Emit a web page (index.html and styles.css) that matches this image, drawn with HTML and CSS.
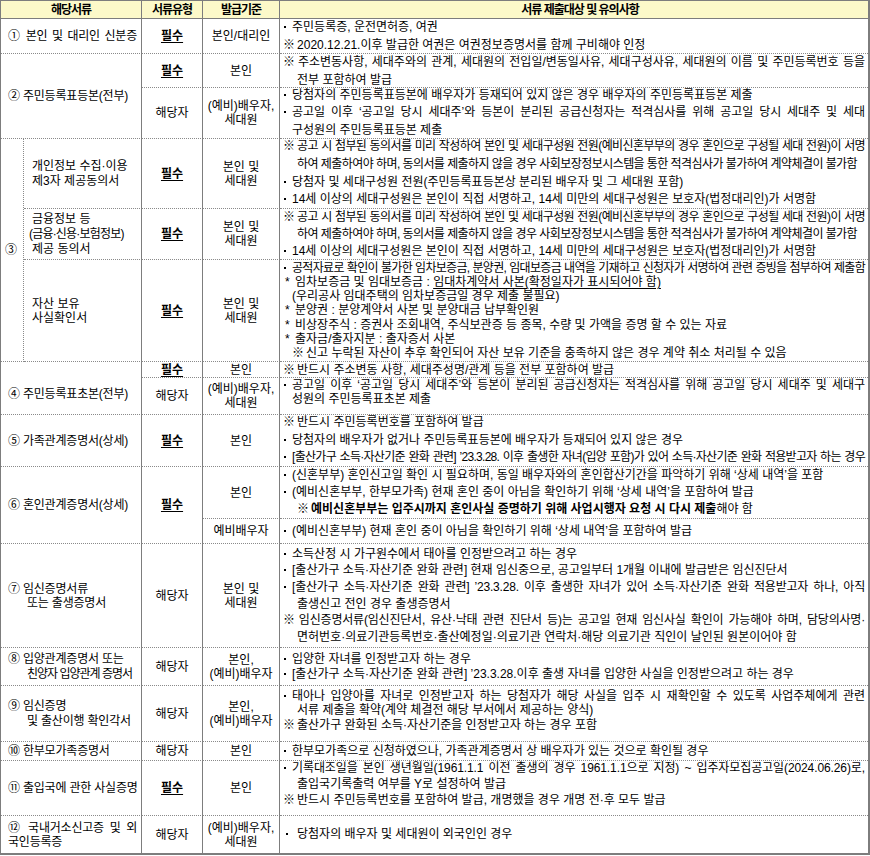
FILE: index.html
```html
<!DOCTYPE html>
<html lang="ko">
<head>
<meta charset="utf-8">
<title>제출서류 안내</title>
<link rel="stylesheet" href="styles.css">
</head>
<body>
<table class="doc">
<colgroup><col class="ca"><col class="cb"><col class="cc"><col class="cd"><col class="ce"></colgroup>
<thead>
<tr class="r0"><th colspan="2">해당서류</th><th>서류유형</th><th>발급기준</th><th class="hx">서류 제출대상 및 유의사항</th></tr>
</thead>
<tbody>
<tr class="r1">
<td colspan="2" class="nm"><div class="j">① 본인 및 대리인 신분증</div></td>
<td class="ty"><b>필수</b></td>
<td class="is">본인/대리인</td>
<td class="tx l18"><div class="in">
<div class="ln b">주민등록증, 운전면허증, 여권</div>
<div class="ln"><span class="k">※</span>2020.12.21.이후 발급한 여권은 여권정보증명서를 함께 구비해야 인정</div>
</div></td>
</tr>
<tr class="r2a">
<td colspan="2" rowspan="2" class="nm">② 주민등록표등본(전부)</td>
<td class="ty"><b>필수</b></td>
<td class="is">본인</td>
<td class="tx l18"><div class="in">
<div class="ln j"><span class="k">※</span>주소변동사항, 세대주와의 관계, 세대원의 전입일/변동일사유, 세대구성사유, 세대원의 이름 및 주민등록번호 등을</div>
<div class="ln c13">전부 포함하여 발급</div>
</div></td>
</tr>
<tr class="r2b">
<td class="ty">해당자</td>
<td class="is">(예비)배우자,<br>세대원</td>
<td class="tx l175"><div class="in">
<div class="ln b">당첨자의 주민등록표등본에 배우자가 등재되어 있지 않은 경우 배우자의 주민등록표등본 제출</div>
<div class="ln b j">공고일 이후 ‘공고일 당시 세대주’와 등본이 분리된 공급신청자는 적격심사를 위해 공고일 당시 세대주 및 세대</div>
<div class="ln c8">구성원의 주민등록표등본 제출</div>
</div></td>
</tr>
<tr class="r3a">
<td rowspan="3" class="num">③</td>
<td class="sn l15">개인정보 수집·이용<br>제3자 제공동의서</td>
<td class="ty"><b>필수</b></td>
<td class="is">본인 및<br>세대원</td>
<td class="tx l178"><div class="in">
<div class="ln j cd1"><span class="k">※</span>공고 시 첨부된 동의서를 미리 작성하여 본인 및 세대구성원 전원(예비신혼부부의 경우 혼인으로 구성될 세대 전원)이 서명</div>
<div class="ln c13 cd2">하여 제출하여야 하며, 동의서를 제출하지 않을 경우 사회보장정보시스템을 통한 적격심사가 불가하여 계약체결이 불가함</div>
<div class="ln b">당첨자 및 세대구성원 전원(주민등록표등본상 분리된 배우자 및 그 세대원 포함)</div>
<div class="ln b">14세 이상의 세대구성원은 본인이 직접 서명하고, 14세 미만의 세대구성원은 보호자(법정대리인)가 서명함</div>
</div></td>
</tr>
<tr class="r3b">
<td class="sn l15"><div>금융정보 등</div><div class="sq">(금융·신용·보험정보)</div><div>제공 동의서</div></td>
<td class="ty"><b>필수</b></td>
<td class="is">본인 및<br>세대원</td>
<td class="tx l17"><div class="in">
<div class="ln j cd1"><span class="k">※</span>공고 시 첨부된 동의서를 미리 작성하여 본인 및 세대구성원 전원(예비신혼부부의 경우 혼인으로 구성될 세대 전원)이 서명</div>
<div class="ln c13 cd2">하여 제출하여야 하며, 동의서를 제출하지 않을 경우 사회보장정보시스템을 통한 적격심사가 불가하여 계약체결이 불가함</div>
<div class="ln b">14세 이상의 세대구성원은 본인이 직접 서명하고, 14세 미만의 세대구성원은 보호자(법정대리인)가 서명함</div>
</div></td>
</tr>
<tr class="r3c">
<td class="sn l14">자산 보유<br>사실확인서</td>
<td class="ty"><b>필수</b></td>
<td class="is">본인 및<br>세대원</td>
<td class="tx l142"><div class="in">
<div class="ln b j cd3">공적자료로 확인이 불가한 임차보증금, 분양권, 임대보증금 내역을 기재하고 신청자가 서명하여 관련 증빙을 첨부하여 제출함</div>
<div class="ln"><span class="st">*</span>임차보증금 및 임대보증금 : <span class="u">임대차계약서 사본(확정일자가 표시되어야 함)</span></div>
<div class="ln c8">(우리공사 임대주택의 임차보증금일 경우 제출 불필요)</div>
<div class="ln"><span class="st">*</span>분양권 : 분양계약서 사본 및 분양대금 납부확인원</div>
<div class="ln"><span class="st">*</span>비상장주식 : 증권사 조회내역, 주식보관증 등 종목, 수량 및 가액을 증명 할 수 있는 자료</div>
<div class="ln"><span class="st">*</span>출자금/출자지분 : 출자증서 사본</div>
<div class="ln c8"><span class="k0">※</span>신고 누락된 자산이 추후 확인되어 자산 보유 기준을 충족하지 않은 경우 계약 취소 처리될 수 있음</div>
</div></td>
</tr>
<tr class="r4a">
<td colspan="2" rowspan="2" class="nm pt12">④ 주민등록표초본(전부)</td>
<td class="ty"><b>필수</b></td>
<td class="is">본인</td>
<td class="tx l14"><div class="in">
<div class="ln"><span class="k">※</span>반드시 주소변동 사항, 세대주성명/관계 등을 전부 포함하여 발급</div>
</div></td>
</tr>
<tr class="r4b">
<td class="ty">해당자</td>
<td class="is">(예비)배우자,<br>세대원</td>
<td class="tx l14 pb8"><div class="in">
<div class="ln b j">공고일 이후 ‘공고일 당시 세대주’와 등본이 분리된 공급신청자는 적격심사를 위해 공고일 당시 세대주 및 세대구</div>
<div class="ln c8">성원의 주민등록표초본 제출</div>
</div></td>
</tr>
<tr class="r5">
<td colspan="2" class="nm">⑤ 가족관계증명서(상세)</td>
<td class="ty"><b>필수</b></td>
<td class="is">본인</td>
<td class="tx l175"><div class="in">
<div class="ln"><span class="k">※</span>반드시 주민등록번호를 포함하여 발급</div>
<div class="ln b">당첨자의 배우자가 없거나 주민등록표등본에 배우자가 등재되어 있지 않은 경우</div>
<div class="ln b j cd3">[출산가구 소득·자산기준 완화 관련] ’23.3.28. 이후 출생한 자녀(입양 포함)가 있어 소득·자산기준 완화 적용받고자 하는 경우</div>
</div></td>
</tr>
<tr class="r6a">
<td colspan="2" rowspan="2" class="nm">⑥ 혼인관계증명서(상세)</td>
<td rowspan="2" class="ty"><b>필수</b></td>
<td class="is">본인</td>
<td class="tx l167"><div class="in">
<div class="ln b">(신혼부부) 혼인신고일 확인 시 필요하며, 동일 배우자와의 혼인합산기간을 파악하기 위해 ‘상세 내역’을 포함</div>
<div class="ln b">(예비신혼부부, 한부모가족) 현재 혼인 중이 아님을 확인하기 위해 ‘상세 내역’을 포함하여 발급</div>
<div class="ln c13"><strong><span class="k">※</span>예비신혼부부는 입주시까지 혼인사실 증명하기 위해 사업시행자 요청 시 다시 제출</strong>해야 함</div>
</div></td>
</tr>
<tr class="r6b">
<td class="is">예비배우자</td>
<td class="tx l17"><div class="in">
<div class="ln b">(예비신혼부부) 현재 혼인 중이 아님을 확인하기 위해 ‘상세 내역’을 포함하여 발급</div>
</div></td>
</tr>
<tr class="r7">
<td colspan="2" class="nm l14"><div>⑦ 임신증명서류</div><div class="i2">또는 출생증명서</div></td>
<td class="ty">해당자</td>
<td class="is">본인 및<br>세대원</td>
<td class="tx l166"><div class="in">
<div class="ln b">소득산정 시 가구원수에서 태아를 인정받으려고 하는 경우</div>
<div class="ln b">[출산가구 소득·자산기준 완화 관련] 현재 임신중으로, 공고일부터 1개월 이내에 발급받은 임신진단서</div>
<div class="ln b j cd4">[출산가구 소득·자산기준 완화 관련] ’23.3.28. 이후 출생한 자녀가 있어 소득·자산기준 완화 적용받고자 하나, 아직</div>
<div class="ln c13">출생신고 전인 경우 출생증명서</div>
<div class="ln j cd4"><span class="k">※</span>임신증명서류(임신진단서, 유산·낙태 관련 진단서 등)는 공고일 현재 임신사실 확인이 가능해야 하며, 담당의사명·</div>
<div class="ln c13">면허번호·의료기관등록번호·출산예정일·의료기관 연락처·해당 의료기관 직인이 날인된 원본이어야 함</div>
</div></td>
</tr>
<tr class="r8">
<td colspan="2" class="nm l15"><div>⑧ 입양관계증명서 또는</div><div class="i2 sq2">친양자 입양관계 증명서</div></td>
<td class="ty">해당자</td>
<td class="is">본인,<br>(예비)배우자</td>
<td class="tx l15"><div class="in">
<div class="ln b">입양한 자녀를 인정받고자 하는 경우</div>
<div class="ln b">[출산가구 소득·자산기준 완화 관련] ’23.3.28.이후 출생 자녀를 입양한 사실을 인정받으려고 하는 경우</div>
</div></td>
</tr>
<tr class="r9">
<td colspan="2" class="nm l15"><div>⑨ 임신증명</div><div class="i2">및 출산이행 확인각서</div></td>
<td class="ty">해당자</td>
<td class="is">본인,<br>(예비)배우자</td>
<td class="tx l145 pb6"><div class="in">
<div class="ln b j">태아나 입양아를 자녀로 인정받고자 하는 당첨자가 해당 사실을 입주 시 재확인할 수 있도록 사업주체에게 관련</div>
<div class="ln c13">서류 제출을 확약(계약 체결전 해당 부서에서 제공하는 양식)</div>
<div class="ln"><span class="k">※</span>출산가구 완화된 소득·자산기준을 인정받고자 하는 경우 포함</div>
</div></td>
</tr>
<tr class="r10">
<td colspan="2" class="nm">⑩ 한부모가족증명서</td>
<td class="ty">해당자</td>
<td class="is">본인</td>
<td class="tx l17"><div class="in">
<div class="ln b">한부모가족으로 신청하였으나, 가족관계증명서 상 배우자가 있는 것으로 확인될 경우</div>
</div></td>
</tr>
<tr class="r11">
<td colspan="2" class="nm">⑪ 출입국에 관한 사실증명</td>
<td class="ty"><b>필수</b></td>
<td class="is">본인</td>
<td class="tx l157 pb6"><div class="in">
<div class="ln b j cd5">기록대조일을 본인 생년월일(1961.1.1 이전 출생의 경우 1961.1.1으로 지정) ~ 입주자모집공고일(2024.06.26)로,</div>
<div class="ln c13">출입국기록출력 여부를 Y로 설정하여 발급</div>
<div class="ln"><span class="k">※</span>반드시 주민등록번호를 포함하여 발급, 개명했을 경우 개명 전·후 모두 발급</div>
</div></td>
</tr>
<tr class="r12 last">
<td colspan="2" class="nm l14"><div class="j">⑫ 국내거소신고증 및 외</div><div>국인등록증</div></td>
<td class="ty">해당자</td>
<td class="is">(예비)배우자,<br>세대원</td>
<td class="tx l17"><div class="in">
<div class="ln b2">당첨자의 배우자 및 세대원이 외국인인 경우</div>
</div></td>
</tr>
</tbody>
</table>
</body>
</html>
```

FILE: styles.css
```css
html, body {
  margin: 0;
  padding: 0;
  background: #ffffff;
}
body {
  font-family: "Liberation Sans", "Noto Sans CJK KR", sans-serif;
  font-size: 12px;
  color: #000000;
}
.doc {
  border-collapse: separate;
  border-spacing: 0;
  table-layout: fixed;
  width: 870px;
  border-top: 1px solid #7d7d7d;
  border-left: 1px solid #7d7d7d;
  border-right: 2px solid #7d7d7d;
  border-bottom: 2px solid #7d7d7d;
}
.ca { width: 23px; }
.cb { width: 118px; }
.cc { width: 61px; }
.cd { width: 77px; }
.ce { width: 588px; }

.doc th,
.doc td {
  padding: 0;
  border-right: 1px solid #7d7d7d;
  border-bottom: 1px dotted #8a8a8a;
  vertical-align: middle;
  line-height: 14px;
}
.doc th {
  background: #fcf9c9;
  font-weight: bold;
  letter-spacing: -1px;
  border-bottom: 1px solid #7d7d7d;
  text-align: center;
}
.doc th.hx { padding-left: 12px; }
.doc th:last-child,
.doc td.tx { border-right: none; }
.doc tr.last td { border-bottom: none; }

.r0 { height: 18px; }
.r1 { height: 35px; }
.r2a { height: 34px; }
.r2b { height: 51px; }
.r3a { height: 70px; }
.r3b { height: 51px; }
.r3c { height: 102px; }
.r4a { height: 16px; }
.r4b { height: 37px; }
.r5 { height: 52px; }
.r6a { height: 52px; }
.r6b { height: 25px; }
.r7 { height: 104px; }
.r8 { height: 38px; }
.r9 { height: 56px; }
.r10 { height: 19px; }
.r11 { height: 55px; }
.r12 { height: 37px; }

/* name column */
.doc td.nm {
  padding: 0 4px 0 7px;
  text-align: left;
  white-space: nowrap;
  letter-spacing: -0.2px;
}
.doc td.num {
  border-right: 1px dotted #8a8a8a;
  padding-left: 4px;
  text-align: left;
}
.doc td.sn {
  padding-left: 8px;
  text-align: left;
  white-space: nowrap;
}
.i2 { padding-left: 19px; }
.sq { letter-spacing: -0.8px; margin-left: -3px; }
.sq2 { letter-spacing: -1px; }

/* type / issue columns */
.doc td.ty { text-align: center; }
.ty b {
  text-decoration: underline;
  text-underline-offset: 2px;
}
.doc td.is {
  text-align: center;
  white-space: nowrap;
}

/* detail column */
.doc td.tx { padding: 0 3px; }
.in { margin: -4px 0; }
.ln { white-space: nowrap; }
.j {
  text-align: justify;
  text-align-last: justify;
}
.cd1 { letter-spacing: -0.6px; }
.cd2 { letter-spacing: -0.56px; }
.cd3 { letter-spacing: -0.7px; }
.cd4 { letter-spacing: -0.2px; }
.cd5 { letter-spacing: -0.1px; }
.b::before,
.b2::before {
  content: "";
  display: inline-block;
  width: 2px;
  height: 2px;
  background: #000;
  vertical-align: 3px;
  margin: 0 6px 0 1px;
}
.b2::before { margin: 0 9px 0 3px; }
.k { margin-right: 2px; }
.k0 { margin-right: 2px; }
.st {
  display: inline-block;
  width: 10px;
  padding-left: 2px;
}
.c13 { padding-left: 14px; }
.c8 { padding-left: 9px; }
.u {
  text-decoration: underline;
  text-underline-offset: 2px;
}

.doc td.l14 { line-height: 14px; }
.doc td.l142 { line-height: 14.2px; }
.doc td.l145 { line-height: 14.5px; }
.doc td.l15 { line-height: 15px; }
.doc td.l157 { line-height: 15.7px; }
.doc td.l166 { line-height: 16.6px; }
.doc td.l167 { line-height: 16.7px; }
.doc td.l17 { line-height: 17px; }
.doc td.l175 { line-height: 17.5px; }
.doc td.l178 { line-height: 17.8px; }
.doc td.l18 { line-height: 18px; }

.doc td.pt12 { padding-top: 12px; }
.doc td.pb6 { padding-bottom: 6px; }
.doc td.pb8 { padding-bottom: 8px; }
```
